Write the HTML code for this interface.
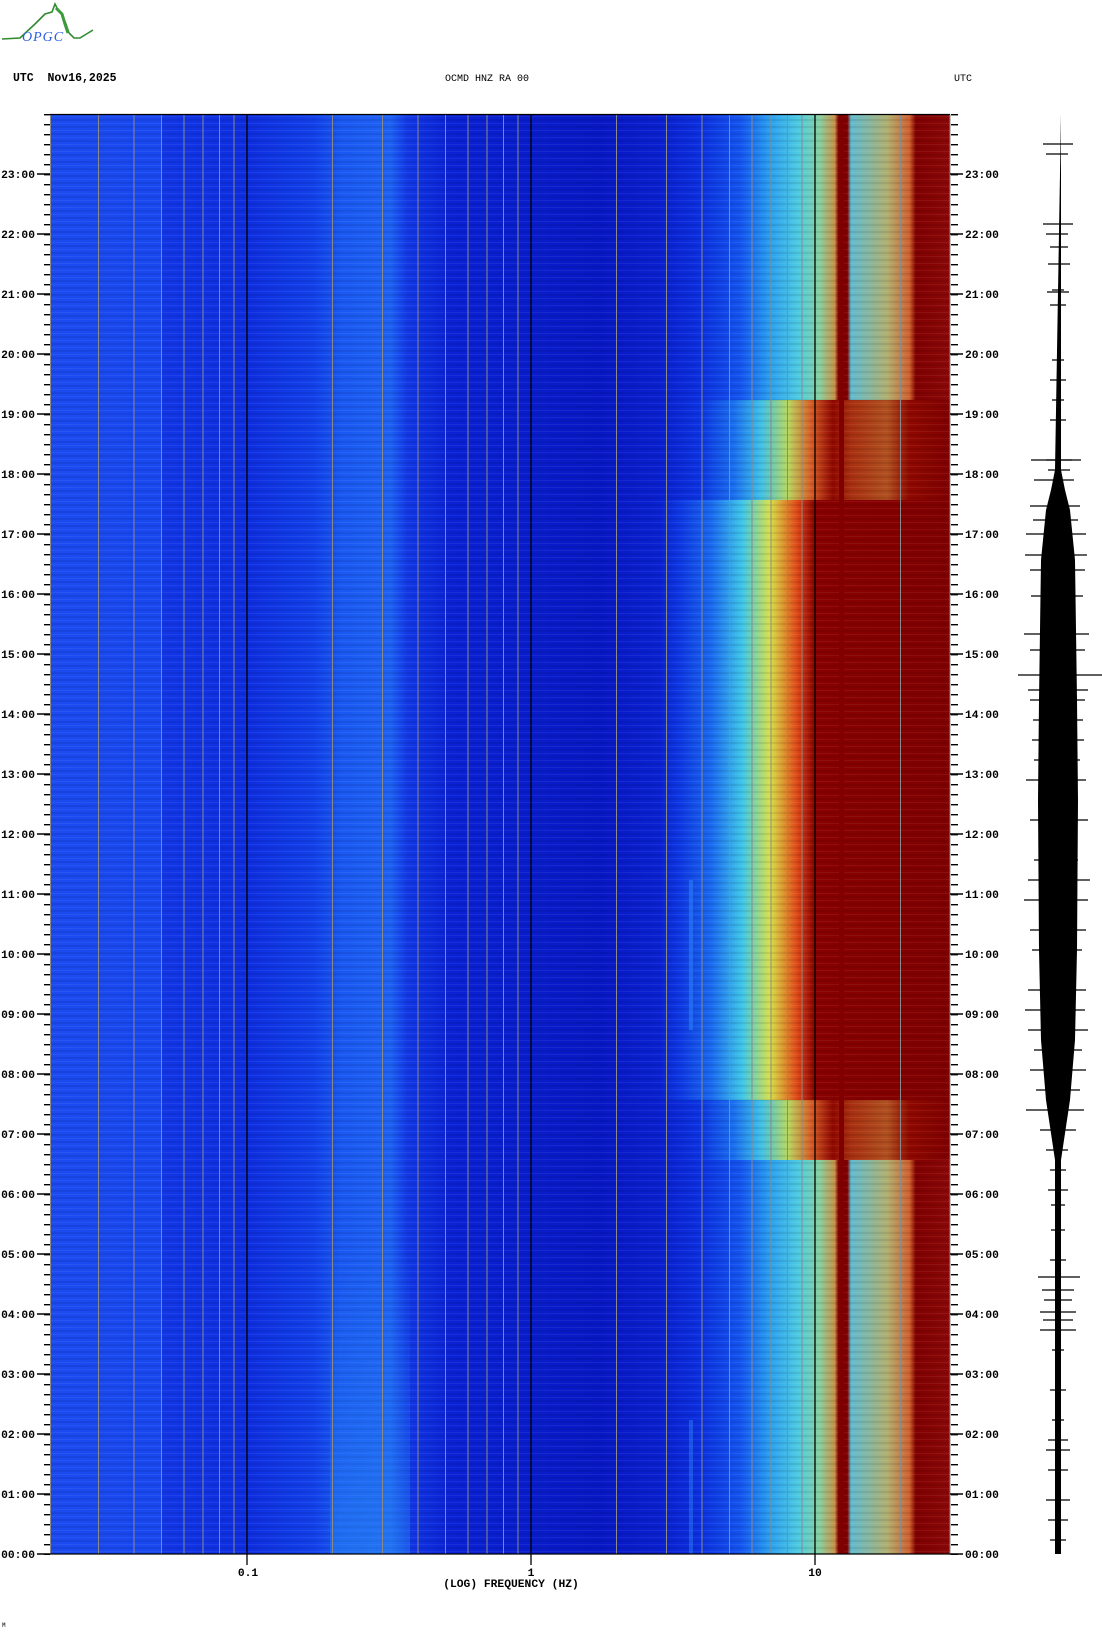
<!DOCTYPE html>
<html><head><meta charset="utf-8"><style>
html,body{margin:0;padding:0;background:#fff;width:1102px;height:1634px;overflow:hidden}
svg{display:block}
text{font-family:"Liberation Mono","DejaVu Sans Mono",monospace;fill:#000}
</style></head><body>
<svg width="1102" height="1634" viewBox="0 0 1102 1634" xmlns="http://www.w3.org/2000/svg">
<defs>
<linearGradient id="ng" gradientUnits="userSpaceOnUse" x1="50" y1="0" x2="950" y2="0">
<stop offset="0" stop-color="#1a4af0"/>
<stop offset="0.123" stop-color="#1a48f0"/>
<stop offset="0.125" stop-color="#1236e6"/>
<stop offset="0.219" stop-color="#0e2ee0"/>
<stop offset="0.292" stop-color="#1240ea"/>
<stop offset="0.322" stop-color="#1a58f2"/>
<stop offset="0.378" stop-color="#1e62f4"/>
<stop offset="0.397" stop-color="#1238e6"/>
<stop offset="0.444" stop-color="#0a22d4"/>
<stop offset="0.611" stop-color="#0818c4"/>
<stop offset="0.678" stop-color="#0a20d0"/>
<stop offset="0.722" stop-color="#0c30e0"/>
<stop offset="0.767" stop-color="#1454f0"/>
<stop offset="0.80" stop-color="#2aa0f0"/>
<stop offset="0.833" stop-color="#50cce0"/>
<stop offset="0.855" stop-color="#88d0a0"/>
<stop offset="0.872" stop-color="#c89048"/>
<stop offset="0.876" stop-color="#800000"/>
<stop offset="0.886" stop-color="#800000"/>
<stop offset="0.89" stop-color="#60bcd0"/>
<stop offset="0.93" stop-color="#b0b070"/>
<stop offset="0.955" stop-color="#d06030"/>
<stop offset="0.962" stop-color="#800000"/>
<stop offset="1" stop-color="#8c0808"/>
</linearGradient>
<linearGradient id="tg" gradientUnits="userSpaceOnUse" x1="50" y1="0" x2="950" y2="0">
<stop offset="0" stop-color="#1a4af0"/>
<stop offset="0.123" stop-color="#1a48f0"/>
<stop offset="0.125" stop-color="#1236e6"/>
<stop offset="0.219" stop-color="#0e2ee0"/>
<stop offset="0.292" stop-color="#1240ea"/>
<stop offset="0.322" stop-color="#1a58f2"/>
<stop offset="0.378" stop-color="#1e62f4"/>
<stop offset="0.397" stop-color="#1238e6"/>
<stop offset="0.444" stop-color="#0a22d4"/>
<stop offset="0.611" stop-color="#0818c4"/>
<stop offset="0.678" stop-color="#0a20d0"/>
<stop offset="0.722" stop-color="#0c34e2"/>
<stop offset="0.76" stop-color="#1a70f0"/>
<stop offset="0.79" stop-color="#40c0e8"/>
<stop offset="0.82" stop-color="#b8d860"/>
<stop offset="0.845" stop-color="#d86028"/>
<stop offset="0.87" stop-color="#900800"/>
<stop offset="0.89" stop-color="#a83010"/>
<stop offset="0.93" stop-color="#b05020"/>
<stop offset="0.955" stop-color="#900800"/>
<stop offset="1" stop-color="#800000"/>
</linearGradient>
<linearGradient id="dg" gradientUnits="userSpaceOnUse" x1="50" y1="0" x2="950" y2="0">
<stop offset="0" stop-color="#1a4af0"/>
<stop offset="0.123" stop-color="#1a48f0"/>
<stop offset="0.125" stop-color="#1236e6"/>
<stop offset="0.219" stop-color="#0e2ee0"/>
<stop offset="0.292" stop-color="#1240ea"/>
<stop offset="0.322" stop-color="#1a58f2"/>
<stop offset="0.378" stop-color="#1e62f4"/>
<stop offset="0.397" stop-color="#1238e6"/>
<stop offset="0.444" stop-color="#0a22d4"/>
<stop offset="0.611" stop-color="#0818c4"/>
<stop offset="0.678" stop-color="#0a22d2"/>
<stop offset="0.70" stop-color="#0e38e4"/>
<stop offset="0.735" stop-color="#1a6af0"/>
<stop offset="0.77" stop-color="#40c8e8"/>
<stop offset="0.80" stop-color="#d8e048"/>
<stop offset="0.83" stop-color="#e04818"/>
<stop offset="0.85" stop-color="#880000"/>
<stop offset="1" stop-color="#800000"/>
</linearGradient>
<linearGradient id="lb" x1="0" y1="0" x2="0" y2="1">
<stop offset="0" stop-color="#2a90f4" stop-opacity="0"/>
<stop offset="1" stop-color="#2a90f4" stop-opacity="0.4"/>
</linearGradient>
<pattern id="mt" patternUnits="userSpaceOnUse" x="0" y="1554" width="20" height="10"><rect x="0" y="0" width="20" height="1.4" fill="#000"/></pattern>
<pattern id="stripe" patternUnits="userSpaceOnUse" x="0" y="0" width="10" height="7"><rect x="0" y="0" width="10" height="2" fill="#000" opacity="0.08"/><rect x="0" y="4" width="10" height="1" fill="#fff" opacity="0.06"/></pattern>
</defs>

<!-- logo -->
<path d="M2,39 L20,38 L35,24 L45,14 L52,12 L55,4 L58,10 L62,14 L66,24 L69,33 L74,38 L80,38 L93,30" fill="none" stroke="#2f8a2f" stroke-width="1.6"/>
<path d="M56,8 L62,14 L65,24 L68,33" fill="none" stroke="#3c9a3c" stroke-width="3"/>
<text x="22" y="41" style="font-family:'Liberation Serif',serif;font-style:italic;font-size:14px;fill:#3060e0;letter-spacing:1px">OPGC</text>

<!-- header -->
<text x="13" y="81" style="font-size:11.5px;font-weight:bold" xml:space="preserve">UTC  Nov16,2025</text>
<text x="445" y="81" style="font-size:10px">OCMD HNZ RA 00</text>
<text x="954" y="81" style="font-size:10px">UTC</text>

<!-- spectrogram -->
<rect x="50" y="114" width="900" height="1440" fill="url(#ng)"/>
<rect x="50" y="400" width="900" height="100" fill="url(#tg)"/>
<rect x="50" y="500" width="900" height="600" fill="url(#dg)"/>
<rect x="50" y="1100" width="900" height="60" fill="url(#tg)"/>
<rect x="50" y="114" width="900" height="1440" fill="url(#stripe)"/>
<rect x="839" y="114" width="5" height="1440" fill="#800000"/>
<rect x="689" y="880" width="4" height="150" fill="#2a80f0" opacity="0.6"/>
<rect x="689" y="1420" width="4" height="134" fill="#2a80f0" opacity="0.5"/>
<rect x="330" y="1250" width="80" height="304" fill="url(#lb)"/>

<!-- grid lines -->
<g stroke="#8a8a8a" stroke-width="1">
<line x1="98.5" y1="114" x2="98.5" y2="1554"/><line x1="134" y1="114" x2="134" y2="1554"/><line x1="161.5" y1="114" x2="161.5" y2="1554"/><line x1="184" y1="114" x2="184" y2="1554"/><line x1="203" y1="114" x2="203" y2="1554"/><line x1="219.5" y1="114" x2="219.5" y2="1554"/><line x1="234" y1="114" x2="234" y2="1554"/>
<line x1="332.5" y1="114" x2="332.5" y2="1554"/><line x1="382.5" y1="114" x2="382.5" y2="1554"/><line x1="418" y1="114" x2="418" y2="1554"/><line x1="445.5" y1="114" x2="445.5" y2="1554"/><line x1="468" y1="114" x2="468" y2="1554"/><line x1="487" y1="114" x2="487" y2="1554"/><line x1="503.5" y1="114" x2="503.5" y2="1554"/><line x1="518" y1="114" x2="518" y2="1554"/>
<line x1="616.5" y1="114" x2="616.5" y2="1554"/><line x1="666.5" y1="114" x2="666.5" y2="1554"/><line x1="702" y1="114" x2="702" y2="1554"/><line x1="729.5" y1="114" x2="729.5" y2="1554"/><line x1="752" y1="114" x2="752" y2="1554"/><line x1="771" y1="114" x2="771" y2="1554"/><line x1="787.5" y1="114" x2="787.5" y2="1554"/><line x1="802" y1="114" x2="802" y2="1554"/><line x1="900.5" y1="114" x2="900.5" y2="1554"/>
<line x1="50.5" y1="114" x2="50.5" y2="1554"/><line x1="950" y1="114" x2="950" y2="1554"/>
</g>
<g stroke="#000" stroke-width="1.3">
<line x1="247" y1="114" x2="247" y2="1565"/><line x1="531" y1="114" x2="531" y2="1565"/><line x1="815" y1="114" x2="815" y2="1565"/>
<line x1="50" y1="114.5" x2="950" y2="114.5"/><line x1="50" y1="1554" x2="950" y2="1554"/>
</g>

<!-- ticks -->
<rect x="44" y="114" width="6" height="1441" fill="url(#mt)"/>
<rect x="951" y="114" width="7" height="1441" fill="url(#mt)"/>
<g stroke="#000" stroke-width="1.5">
<path d="M37,1554h13M37,1494h13M37,1434h13M37,1374h13M37,1314h13M37,1254h13M37,1194h13M37,1134h13M37,1074h13M37,1014h13M37,954h13M37,894h13M37,834h13M37,774h13M37,714h13M37,654h13M37,594h13M37,534h13M37,474h13M37,414h13M37,354h13M37,294h13M37,234h13M37,174h13"/>
<path d="M950,1554h13M950,1494h13M950,1434h13M950,1374h13M950,1314h13M950,1254h13M950,1194h13M950,1134h13M950,1074h13M950,1014h13M950,954h13M950,894h13M950,834h13M950,774h13M950,714h13M950,654h13M950,594h13M950,534h13M950,474h13M950,414h13M950,354h13M950,294h13M950,234h13M950,174h13"/>
</g>

<g style="font-size:11.3px;font-weight:bold" text-anchor="end">
<text x="35" y="1558">00:00</text><text x="35" y="1498">01:00</text><text x="35" y="1438">02:00</text><text x="35" y="1378">03:00</text><text x="35" y="1318">04:00</text><text x="35" y="1258">05:00</text><text x="35" y="1198">06:00</text><text x="35" y="1138">07:00</text><text x="35" y="1078">08:00</text><text x="35" y="1018">09:00</text><text x="35" y="958">10:00</text><text x="35" y="898">11:00</text><text x="35" y="838">12:00</text><text x="35" y="778">13:00</text><text x="35" y="718">14:00</text><text x="35" y="658">15:00</text><text x="35" y="598">16:00</text><text x="35" y="538">17:00</text><text x="35" y="478">18:00</text><text x="35" y="418">19:00</text><text x="35" y="358">20:00</text><text x="35" y="298">21:00</text><text x="35" y="238">22:00</text><text x="35" y="178">23:00</text>
</g>
<g style="font-size:11.3px;font-weight:bold">
<text x="965" y="1558">00:00</text><text x="965" y="1498">01:00</text><text x="965" y="1438">02:00</text><text x="965" y="1378">03:00</text><text x="965" y="1318">04:00</text><text x="965" y="1258">05:00</text><text x="965" y="1198">06:00</text><text x="965" y="1138">07:00</text><text x="965" y="1078">08:00</text><text x="965" y="1018">09:00</text><text x="965" y="958">10:00</text><text x="965" y="898">11:00</text><text x="965" y="838">12:00</text><text x="965" y="778">13:00</text><text x="965" y="718">14:00</text><text x="965" y="658">15:00</text><text x="965" y="598">16:00</text><text x="965" y="538">17:00</text><text x="965" y="478">18:00</text><text x="965" y="418">19:00</text><text x="965" y="358">20:00</text><text x="965" y="298">21:00</text><text x="965" y="238">22:00</text><text x="965" y="178">23:00</text>
</g>

<!-- bottom labels -->
<g style="font-size:11.3px;font-weight:bold" text-anchor="middle">
<text x="248" y="1576">0.1</text><text x="531" y="1576">1</text><text x="815" y="1576">10</text>
<text x="511" y="1587">(LOG) FREQUENCY (HZ)</text>
</g>
<text x="2" y="1627" style="font-size:6px">M</text>

<!-- seismogram -->
<polygon fill="#000" points="1061,114 1061,470 1065,490 1070,510 1075,560 1077,700 1078,800 1077,950 1075,1040 1070,1100 1064,1140 1061,1160 1061,1554 1055,1554 1055,1160 1052,1140 1046,1100 1041,1040 1039,950 1038,800 1039,700 1041,560 1046,510 1051,490 1055,470"/>
<g stroke="#000" stroke-width="1.2">
<path d="M1043,144h30M1046,154h22M1043,224h30M1046,234h22M1050,247h18M1048,264h22M1052,290h12M1047,292h22M1050,305h16M1052,360h12M1050,380h16M1052,400h12M1050,420h16M1046,460h26M1048,470h22"/>
<path d="M1031,460h50M1034,480h40M1030,506h50M1033,520h45M1026,534h60M1025,555h62M1030,570h55M1031,596h52M1024,634h65M1030,650h55M1028,690h60M1018,675h84M1030,700h55M1033,720h50M1032,740h52M1026,780h60M1034,760h46M1030,820h58M1034,860h44M1028,880h62M1024,900h64M1030,930h56M1032,950h50M1028,990h58M1025,1010h60M1028,1030h60M1034,1050h48M1030,1070h56M1036,1090h44M1026,1110h58M1040,1130h36M1046,1150h22"/>
<path d="M1050,1170h16M1048,1190h20M1051,1205h14M1051,1230h14M1050,1260h16M1038,1277h42M1042,1290h32M1044,1300h28M1040,1312h36M1043,1320h30M1040,1330h36M1052,1350h12M1050,1390h16M1052,1420h12M1048,1440h20M1046,1450h24M1048,1470h20M1046,1500h24M1048,1520h20M1050,1540h16"/>
</g>
</svg>
</body></html>
